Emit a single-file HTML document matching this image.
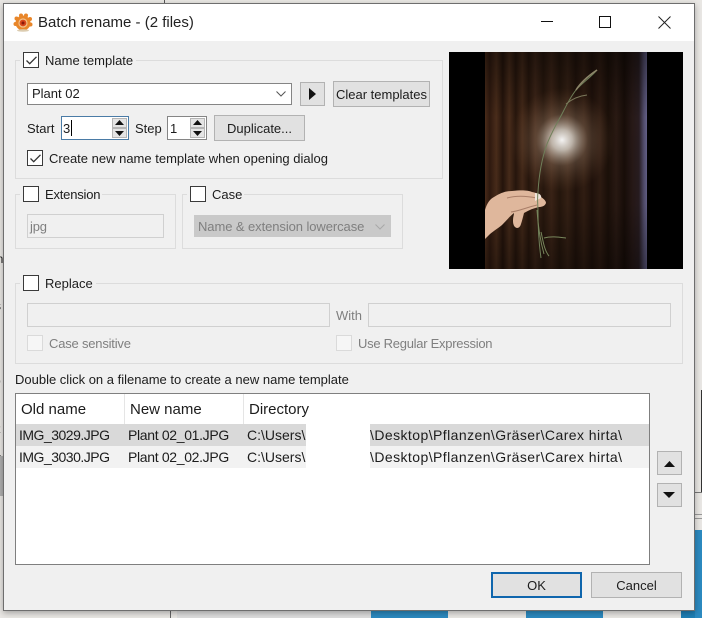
<!DOCTYPE html>
<html><head><meta charset="utf-8"><style>
html,body{margin:0;padding:0;width:702px;height:618px;overflow:hidden;background:#e9e7e4}
*{box-sizing:border-box}
div,span{position:absolute}
#r{left:0;top:0;width:702px;height:618px;overflow:hidden;font-family:"Liberation Sans",sans-serif;font-size:13px;color:#1c1c1c}
.t{white-space:nowrap;line-height:18px;height:18px}
.g{color:#7f7f7f;letter-spacing:-.2px}
.gb{border:1px solid #dcdcdc;background:#f0f0f0}
.cb{width:16px;height:16px;border:1px solid #3a3a3a;background:#fff}
.cd{width:16px;height:16px;border:1px solid #dadada;background:#f6f6f6}
.btn{background:#e1e1e1;border:1px solid #b2b2b2;text-align:center;line-height:26px;white-space:nowrap}
.in{background:#fff;border:1px solid #858585}
.dis{background:#f0f0f0;border:1px solid #d0d0d0}
.h{font-size:15px}
.a{font-size:14px;letter-spacing:-.5px}
.b{font-size:14px;letter-spacing:-.33px}
.c{font-size:14px}
.d{font-size:14px;letter-spacing:.43px}
svg{position:absolute;overflow:visible}
</style></head><body><div id="r">

<!-- background behind dialog -->
<div style="left:164px;top:0;width:1px;height:4px;background:#555"></div>
<div style="left:0;top:456px;width:3px;height:40px;background:#b0b0b0"></div>
<div style="left:170px;top:610px;width:1px;height:8px;background:#666"></div>
<div style="left:177px;top:610px;width:195px;height:8px;background:#dedede"></div>
<div style="left:371px;top:610px;width:77px;height:8px;background:#2c8ac0"></div>
<div style="left:526px;top:610px;width:77px;height:8px;background:#2c8ac0"></div>
<div style="left:681px;top:610px;width:21px;height:8px;background:#1f7fb5"></div>
<div style="left:695px;top:530px;width:7px;height:88px;background:#2c8ac0"></div>
<div style="left:701px;top:390px;width:1px;height:102px;background:#333"></div>
<div style="left:695px;top:492px;width:7px;height:1px;background:#777"></div>
<div style="left:695px;top:514px;width:7px;height:1px;background:#999"></div>
<div style="left:695px;top:518px;width:7px;height:1px;background:#999"></div>
<div class="t" style="left:-6px;top:250px;font-size:12px">in</div>
<div class="t" style="left:-6px;top:273px;font-size:12px;color:#123">u</div>
<div class="t" style="left:-5px;top:297px;font-size:12px">s</div>
<div class="t" style="left:-6px;top:372px;font-size:12px">o</div>
<div class="t" style="left:-7px;top:396px;font-size:12px">u</div>
<div class="t" style="left:-3px;top:420px;font-size:12px">t</div>
<div class="t" style="left:-6px;top:443px;font-size:12px">a</div>

<!-- dialog -->
<div style="left:3px;top:3px;width:692px;height:608px;background:#f0f0f0;border:1px solid #6e6e6e;box-shadow:0 2px 6px rgba(0,0,0,.3)"></div>
<div style="left:4px;top:4px;width:690px;height:37px;background:#fff"></div>

<!-- icon -->
<svg style="left:13px;top:12px" width="20" height="20" viewBox="0 0 20 20">
<g fill="#e8862a"><circle cx="10" cy="11" r="7.5"/><circle cx="3.5" cy="6.5" r="2"/><circle cx="8" cy="3.5" r="2"/><circle cx="13" cy="3.5" r="2"/><circle cx="17" cy="7" r="2"/><circle cx="2.5" cy="12" r="2"/><circle cx="17.5" cy="12.5" r="2"/></g>
<ellipse cx="10" cy="18.500" rx="6" ry="1.200" fill="#dcccb0"/>
<circle cx="10" cy="11" r="4.600" fill="#f2c48c"/><circle cx="10" cy="11" r="3.400" fill="#d9481c"/><circle cx="10" cy="11" r="1.500" fill="#8c1a0a"/>
</svg>
<div class="t" style="left:38px;top:14px;font-size:15px;color:#222">Batch rename - (2 files)</div>

<!-- window controls -->
<div style="left:541px;top:21px;width:12px;height:1px;background:#111"></div>
<div style="left:599px;top:16px;width:12px;height:12px;border:1px solid #111"></div>
<svg style="left:658px;top:16px" width="13" height="13" viewBox="0 0 13 13"><path d="M.5.5l12 12M12.500.5l-12 12" stroke="#222" stroke-width="1" fill="none"/></svg>

<!-- Name template -->
<div class="gb" style="left:15px;top:60px;width:428px;height:119px"></div>
<div style="left:20px;top:55px;width:116px;height:12px;background:#f0f0f0"></div>
<div class="cb" style="left:23px;top:52px"><svg style="left:2px;top:3px" width="11" height="9" viewBox="0 0 11 9"><path d="M.5 4.500l3.200 3.200L10.500.8" stroke="#333" stroke-width="1.300" fill="none"/></svg></div>
<div class="t" style="left:45px;top:52px">Name template</div>

<div class="in" style="left:27px;top:83px;width:265px;height:22px"></div>
<div class="t" style="left:32px;top:85px">Plant 02</div>
<svg style="left:276px;top:91px" width="10" height="6" viewBox="0 0 10 6"><path d="M.5.500L5 5 9.500.5" stroke="#555" fill="none"/></svg>
<div class="btn" style="left:300px;top:82px;width:25px;height:24px"></div>
<svg style="left:309px;top:88px" width="7" height="12"><path d="M0 0l7 6-7 6z" fill="#111"/></svg>
<div class="btn" style="left:333px;top:81px;width:97px;height:26px">Clear templates</div>

<div class="t" style="left:27px;top:120px">Start</div>
<div style="left:61px;top:116px;width:68px;height:24px;background:#fff;border:1px solid #4a7ba6"></div>
<div class="t" style="left:63px;top:120px">3</div>
<div style="left:71px;top:120px;width:1px;height:16px;background:#000"></div>
<div style="left:112px;top:118px;width:15px;height:10px;background:#e4e4e4;border:1px solid #b5b5b5"></div>
<div style="left:112px;top:128px;width:15px;height:10px;background:#e4e4e4;border:1px solid #b5b5b5"></div>
<svg style="left:115px;top:120px" width="9" height="16"><path d="M0 5l4.500-5L9 5zM0 11l4.500 5L9 11z" fill="#111"/></svg>
<div class="t" style="left:135px;top:120px">Step</div>
<div class="in" style="left:167px;top:116px;width:40px;height:24px"></div>
<div class="t" style="left:170px;top:120px">1</div>
<div style="left:190px;top:118px;width:15px;height:10px;background:#e4e4e4;border:1px solid #b5b5b5"></div>
<div style="left:190px;top:128px;width:15px;height:10px;background:#e4e4e4;border:1px solid #b5b5b5"></div>
<svg style="left:193px;top:120px" width="9" height="16"><path d="M0 5l4.500-5L9 5zM0 11l4.500 5L9 11z" fill="#111"/></svg>
<div class="btn" style="left:214px;top:115px;width:91px;height:26px">Duplicate...</div>

<div class="cb" style="left:27px;top:150px"><svg style="left:2px;top:3px" width="11" height="9" viewBox="0 0 11 9"><path d="M.5 4.500l3.200 3.200L10.500.8" stroke="#333" stroke-width="1.300" fill="none"/></svg></div>
<div class="t" style="left:49px;top:150px">Create new name template when opening dialog</div>

<!-- Extension -->
<div class="gb" style="left:15px;top:194px;width:161px;height:55px"></div>
<div style="left:20px;top:188px;width:82px;height:12px;background:#f0f0f0"></div>
<div class="cb" style="left:23px;top:186px"></div>
<div class="t" style="left:45px;top:186px;letter-spacing:-.2px">Extension</div>
<div class="dis" style="left:27px;top:214px;width:137px;height:24px"></div>
<div class="t g" style="left:30px;top:218px">jpg</div>

<!-- Case -->
<div class="gb" style="left:182px;top:194px;width:221px;height:55px"></div>
<div style="left:187px;top:188px;width:57px;height:12px;background:#f0f0f0"></div>
<div class="cb" style="left:190px;top:186px"></div>
<div class="t" style="left:212px;top:186px">Case</div>
<div style="left:194px;top:215px;width:197px;height:22px;background:#c9c9c9"></div>
<div class="t g" style="left:198px;top:218px;letter-spacing:-.08px">Name &amp; extension lowercase</div>
<svg style="left:375px;top:224px" width="10" height="6" viewBox="0 0 10 6"><path d="M.5.500L5 5 9.500.5" stroke="#a8a8a8" fill="none"/></svg>

<!-- Replace -->
<div class="gb" style="left:15px;top:283px;width:668px;height:81px"></div>
<div style="left:20px;top:277px;width:76px;height:12px;background:#f0f0f0"></div>
<div class="cb" style="left:23px;top:275px"></div>
<div class="t" style="left:45px;top:275px">Replace</div>
<div class="dis" style="left:27px;top:303px;width:303px;height:24px"></div>
<div class="t g" style="left:336px;top:307px;letter-spacing:0">With</div>
<div class="dis" style="left:368px;top:303px;width:303px;height:24px"></div>
<div class="cd" style="left:27px;top:335px"></div>
<div class="t g" style="left:49px;top:335px">Case sensitive</div>
<div class="cd" style="left:336px;top:335px"></div>
<div class="t g" style="left:358px;top:335px;letter-spacing:-.27px">Use Regular Expression</div>

<div class="t" style="left:15px;top:371px">Double click on a filename to create a new name template</div>

<!-- List -->
<div style="left:15px;top:393px;width:635px;height:172px;background:#fff;border:1px solid #7f7f7f"></div>
<div style="left:124px;top:394px;width:1px;height:30px;background:#e5e5e5"></div>
<div style="left:243px;top:394px;width:1px;height:30px;background:#e5e5e5"></div>
<div class="t h" style="left:21px;top:401px">Old name</div>
<div class="t h" style="left:130px;top:401px">New name</div>
<div class="t h" style="left:249px;top:401px">Directory</div>
<div style="left:16px;top:424px;width:290px;height:22px;background:#d9d9d9"></div>
<div style="left:370px;top:424px;width:279px;height:22px;background:#d9d9d9"></div>
<div style="left:16px;top:446px;width:290px;height:22px;background:#f2f2f2"></div>
<div style="left:370px;top:446px;width:279px;height:22px;background:#f2f2f2"></div>
<div class="t a" style="left:19px;top:426px">IMG_3029.JPG</div>
<div class="t b" style="left:128px;top:426px">Plant 02_01.JPG</div>
<div class="t c" style="left:247px;top:426px">C:\Users\</div>
<div class="t d" style="left:370px;top:426px">\Desktop\Pflanzen\Gräser\Carex hirta\</div>
<div class="t a" style="left:19px;top:448px">IMG_3030.JPG</div>
<div class="t b" style="left:128px;top:448px">Plant 02_02.JPG</div>
<div class="t c" style="left:247px;top:448px">C:\Users\</div>
<div class="t d" style="left:370px;top:448px">\Desktop\Pflanzen\Gräser\Carex hirta\</div>

<div class="btn" style="left:657px;top:451px;width:25px;height:24px"></div>
<svg style="left:664px;top:461px" width="11" height="6"><path d="M0 6l5.500-6 5.500 6z" fill="#111"/></svg>
<div class="btn" style="left:657px;top:483px;width:25px;height:24px"></div>
<svg style="left:663px;top:492px" width="12" height="6"><path d="M0 0l6 6 6-6z" fill="#111"/></svg>

<div class="btn" style="left:491px;top:572px;width:91px;height:26px;border:2px solid #0f66ad;line-height:24px">OK</div>
<div class="btn" style="left:591px;top:572px;width:91px;height:26px">Cancel</div>

<!-- Photo -->
<svg style="left:449px;top:52px" width="234" height="217" viewBox="0 0 234 217">
<defs>
<linearGradient id="w" x1="0" x2="1" y1="0" y2="0">
<stop offset="0" stop-color="#4e2e1b"/><stop offset=".03" stop-color="#321b10"/><stop offset=".07" stop-color="#4e2f1c"/><stop offset=".11" stop-color="#27150c"/><stop offset=".15" stop-color="#4c2e1c"/><stop offset=".19" stop-color="#29170d"/><stop offset=".23" stop-color="#472b1a"/><stop offset=".27" stop-color="#29170d"/><stop offset=".31" stop-color="#42281a"/><stop offset=".36" stop-color="#29180e"/><stop offset=".41" stop-color="#3f2618"/><stop offset=".46" stop-color="#27170d"/><stop offset=".51" stop-color="#392316"/><stop offset=".56" stop-color="#23140c"/><stop offset=".61" stop-color="#352014"/><stop offset=".66" stop-color="#21120b"/><stop offset=".71" stop-color="#311d13"/><stop offset=".76" stop-color="#1c1009"/><stop offset=".81" stop-color="#2c1b14"/><stop offset=".86" stop-color="#190e09"/><stop offset=".91" stop-color="#291a18"/><stop offset=".95" stop-color="#2a1e22"/><stop offset=".98" stop-color="#555070"/><stop offset="1" stop-color="#6a6690"/>
</linearGradient>
<radialGradient id="gl"><stop offset="0" stop-color="#fff" stop-opacity=".95"/><stop offset=".2" stop-color="#ece6dc" stop-opacity=".75"/><stop offset=".5" stop-color="#b89a80" stop-opacity=".28"/><stop offset="1" stop-color="#8a6040" stop-opacity="0"/></radialGradient>
<linearGradient id="sh" x1="0" x2="0" y1="0" y2="1"><stop offset="0" stop-color="#000" stop-opacity=".45"/><stop offset=".3" stop-color="#000" stop-opacity=".05"/><stop offset=".7" stop-color="#000" stop-opacity=".1"/><stop offset="1" stop-color="#000" stop-opacity=".4"/></linearGradient>
</defs>
<rect width="234" height="217" fill="#000"/>
<rect x="36" width="162" height="217" fill="url(#w)"/>
<rect x="36" width="162" height="217" fill="url(#sh)"/>
<circle cx="113" cy="88" r="52" fill="url(#gl)"/>
<path d="M36 158c2-7 5-11 9-13 6-4 12-6 18-6 8-1 16-1 20 1 5 1 9 3 9 5 3 2 5 4 5 6-1 3-4 4-7 4-5 1-10 3-15 6-1 4-2 8-3 11-1 4-4 5-6 3-2-2-2-5-2-7 0-3 1-5 1-7-4 3-8 8-12 12-5 4-10 7-13 10-2 2-3 3-4 4z" fill="#dfb79c"/>
<path d="M58 146c10-3 20-2 30 0M62 160c8-1 14-4 26-7" stroke="#a97e68" fill="none"/>
<path d="M86 141c4 0 7 2 6 5l-6 3z" fill="#f0e4da"/>
<path d="M92 206c-2-14-3-30-3-46 0-7-1-13 0-20 1-18 4-34 9-48 6-15 12-24 16-32 4-8 9-17 13-22 6-7 15-13 21-20" stroke="#70805a" stroke-width="1" fill="none"/>
<path d="M127 38c5-8 12-14 21-20" stroke="#8c8468" stroke-width="1.600" fill="none"/>
<path d="M117 52c6-5 12-8 21-9" stroke="#7c7a5c" fill="none"/>
<path d="M88 158c1 16 3 30 7 44M95 186c7-2 14-1 22 0M92 180c2 8 3 18 8 24" stroke="#78875c" fill="none"/>
</svg>
</div></body></html>
